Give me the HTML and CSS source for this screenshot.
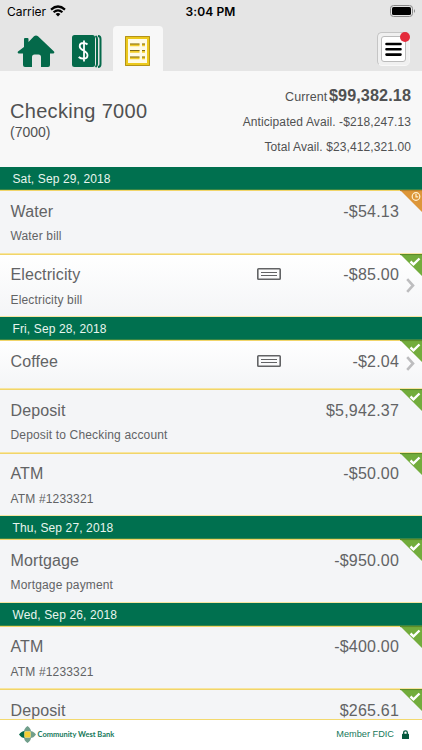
FILE: index.html
```html
<!DOCTYPE html>
<html lang="en">

<head>
    <meta charset="UTF-8">
    <meta name="viewport" content="width=device-width, initial-scale=1.0">
    <title>Checking 7000</title>
    <link rel="stylesheet" href="styles.css">
</head>

<body>
<div class="app">
    <header class="top">
        <div class="status">
            <div class="carrier">
                <span>Carrier</span>
                <svg width="16" height="12" viewBox="0 0 16 12" fill="none" stroke="#000" stroke-width="2.2">
                    <path d="M1 4.6Q8-1.6 15 4.6M3.6 7.3Q8 3.3 12.4 7.3"/>
                    <path d="M5.6 9Q8 6.9 10.4 9L8 11.5Z" fill="#000" stroke="none"/>
                </svg>
            </div>
            <div class="time">3:04 PM</div>
            <svg class="battery" width="26" height="12" viewBox="0 0 26 12">
                <rect x=".5" y=".5" width="22" height="11" rx="3" fill="none" stroke="#888"/>
                <rect x="2" y="2" width="19" height="8" rx="1.6"/>
                <path d="M24 4Q26 6 24 8Z" fill="#888"/>
            </svg>
        </div>
        <nav class="tabs">
            <a class="tab home">
                <svg width="38" height="33" viewBox="0 0 38 33" fill="#04694a">
                    <path d="M7 12V4Q7 3 8 3H10.500Q11.500 3 11.500 4V7L17 1.200Q19-.3 21 1.200L37 16.500Q38 18.500 36 18.500H33V30Q33 32 31 32H24V22Q24 19.500 21.500 19.500H17.500Q15 19.500 15 22V32H8Q6 32 6 30V18.500H2Q0 18.500 1 16.500Z"/>
                </svg>
            </a>
            <a class="tab money">
                <svg width="30" height="33" viewBox="0 0 30 33">
                    <rect x="0" y="0" width="23" height="32" rx="2.5" fill="#04694a"/>
                    <path d="M23.500 1Q25 2 25 4V29Q25 31 23.500 32M26 1Q28.500 1 28.500 4V29Q28.500 32 26 32" fill="none" stroke="#04694a" stroke-width="2"/>
                    <path d="M15.500 9.500Q14 8 11.500 8Q7.700 8 7.700 11.200Q7.700 13.500 11.500 15.500Q15.500 17.500 15.500 20.300Q15.500 23.700 11.500 23.700Q8.500 23.700 6.700 22M12 5.500V26.500" fill="none" stroke="#fff" stroke-width="1.800"/>
                </svg>
            </a>
            <a class="tab active">
                <svg width="25" height="30" viewBox="0 0 25 30">
                    <rect x="1.500" y="1.500" width="22" height="27" fill="#fffbe6" stroke="#ecc91c" stroke-width="3"/>
                    <path d="M.5 29.500V.5H24.500V29.500Z" fill="none" stroke="#b3921a"/>
                    <path d="M5 9H14.500M5 15.500H14.500M5 22H14.500M17 9H20M17 15.500H20M17 22H20" stroke="#f1cb27" stroke-width="2.600"/>
                    <path d="M5 8H14.500M5 14.500H14.500M5 21H14.500M17 8H20M17 14.500H20M17 21H20" stroke="#806b18"/>
                </svg>
            </a>
            <a class="menu">
                <span class="menu-inner">
                    <svg width="17" height="15" viewBox="0 0 17 15" stroke="#000" stroke-width="2.600" stroke-linecap="round">
                        <path d="M1.500 2H15.500M1.500 7.300H15.500M1.500 12.600H15.500"/>
                    </svg>
                </span>
                <i class="dot"></i>
            </a>
        </nav>
    </header>

    <section class="summary">
        <div class="account">
            <h1>Checking 7000</h1>
            <p>(7000)</p>
        </div>
        <div class="balances">
            <p class="current">Current <b>$99,382.18</b></p>
            <p class="anticipated">Anticipated Avail. -$218,247.13</p>
            <p class="total">Total Avail. $23,412,321.00</p>
        </div>
    </section>

    <main class="list" id="list"></main>

    <footer class="foot">
        <div class="brand">
            <svg width="17" height="17" viewBox="0 0 17 17">
                <path d="M8.500 0Q12 2.500 12 5.500H5Q5 2.500 8.500 0ZM8.500 17Q5 14.500 5 11.500H12Q12 14.500 8.500 17ZM17 8.500Q14.500 12 11.500 12V5Q14.500 5 17 8.500Z" fill="#719f8b"/>
                <path d="M0 8.500Q2.500 5 5.500 5V12Q2.500 12 0 8.500Z" fill="#04694a"/>
                <rect x="5.500" y="5.500" width="6" height="6" rx="1" fill="#f3cf35"/>
            </svg>
            <span>Community West Bank</span>
        </div>
        <div class="fdic">
            <span>Member FDIC</span>
            <svg width="7" height="9" viewBox="0 0 7 9">
                <path d="M1.700 4V2.500Q1.700.8 3.500.8T5.300 2.500V4" fill="none" stroke="#04583d" stroke-width="1.300"/>
                <rect x="0" y="3.700" width="7" height="5.300" rx=".6" fill="#04583d"/>
            </svg>
        </div>
    </footer>
</div>
<script>

    let days = [
        {
            date: 'Sat, Sep 29, 2018',
            items: [
                {name: 'Water', note: 'Water bill', amount: '-$54.13', pending: true},
                {name: 'Electricity', note: 'Electricity bill', amount: '-$85.00', check: true}
            ]
        },
        {
            date: 'Fri, Sep 28, 2018',
            items: [
                {name: 'Coffee', note: '', amount: '-$2.04', check: true, short: true},
                {name: 'Deposit', note: 'Deposit to Checking account', amount: '$5,942.37'},
                {name: 'ATM', note: 'ATM #1233321', amount: '-$50.00'}
            ]
        },
        {
            date: 'Thu, Sep 27, 2018',
            items: [
                {name: 'Mortgage', note: 'Mortgage payment', amount: '-$950.00'}
            ]
        },
        {
            date: 'Wed, Sep 26, 2018',
            items: [
                {name: 'ATM', note: 'ATM #1233321', amount: '-$400.00'},
                {name: 'Deposit', note: '', amount: '$265.61'}
            ]
        }
    ]

    // corner flags
    let clock = '<circle cx="16" cy="6.500" r="3.800"/><path d="M16 4V6.800H18.200"/>';
    let tick = '<path class="tick" d="M10.500 7.500L13.500 10.300L19.500 4.500"/>';
    let flag = item => `<svg class="flag ${item.pending ? 'pending' : 'cleared'}" width="22" height="22" viewBox="0 0 22 22">
        <path class="corner" d="M0 0H22V22Z"/><path class="shade" d="M0 .5H22"/>${item.pending ? clock : tick}</svg>`;

    let checkIcon = `<svg class="check" width="24" height="12" viewBox="0 0 24 12">
        <rect x=".8" y=".8" width="22.400" height="10.400" rx=".8"/><path d="M4 4.500H20M4 7.500H20"/></svg>`;
    let arrow = '<svg class="arrow" width="9" height="15" viewBox="0 0 9 15"><path d="M1.200 1.200L7 7.500L1.200 13.800"/></svg>';

    let list = document.querySelector("#list");
    days.forEach(day => {
        let html = `<h2 class="date">${day.date}</h2>`;
        day.items.forEach(item => {
            html += `<div class="row${item.check ? ' link' : ''}${item.short ? ' short' : ''}">
                <div class="line"><span class="name">${item.name}</span>${item.check ? checkIcon : ''}<span class="amount">${item.amount}</span></div>
                <p class="note">${item.note}</p>
                ${flag(item)}${item.check ? arrow : ''}
            </div>`;
        })
        list.insertAdjacentHTML("beforeend", html);
    })
</script>
</body>

</html>
```
FILE: styles.css
```css
* {
    margin: 0;
    padding: 0;
    box-sizing: border-box;
}

body {
    font-family: "Liberation Sans", Arial, sans-serif;
    color: #505152;
    background: #f8f8f8;
}

svg {
    display: block;
    flex-shrink: 0;
}

.app {
    height: 750px;
    display: flex;
    flex-direction: column;
    overflow: hidden;
}

.top {
    height: 71px;
    background: #e5e5e5;
}

.status {
    height: 26px;
    padding: 0 6px 4px 7px;
    display: grid;
    grid-template-columns: 1fr auto 1fr;
    align-items: center;
    font-family: Inter, sans-serif;
    font-size: 12px;
    color: #000;
}

.carrier {
    display: flex;
    align-items: center;
    gap: 4px;
}

.carrier span {
    letter-spacing: -.05px;
}

.time {
    margin-right: 2px;
    font-weight: 600;
    letter-spacing: .1px;
}

.battery {
    justify-self: end;
}

.tabs {
    height: 45px;
    padding-left: 17px;
    padding-right: 12px;
    display: flex;
}

.tab {
    padding-top: 9px;
}

.home {
    width: 55px;
}

.money {
    width: 41px;
}

.tab.active {
    width: 50px;
    padding: 10px 0 0 12px;
    background: #f8f8f8;
    border-radius: 4px 4px 0 0;
}

.menu {
    position: relative;
    width: 33px;
    height: 34px;
    margin: 6px 0 0 auto;
    padding: 3px;
    border: 1px solid #c5c5c5;
    border-right-color: #f4f4f4;
    border-bottom-color: #f8f8f8;
    border-radius: 5px;
    background: #f0f0f0;
}

.menu-inner {
    height: 26px;
    display: flex;
    align-items: center;
    justify-content: center;
    background: #fff;
    border: 1px solid #bbb;
    border-radius: 3px;
}

.dot {
    position: absolute;
    top: -1px;
    right: -1px;
    width: 10px;
    height: 10px;
    border-radius: 50%;
    background: #e42b3b;
}

.summary {
    height: 96px;
    padding: 0 11px 0 10px;
    display: flex;
    justify-content: space-between;
    background: #f8f8f8;
}

.account {
    padding-top: 28px;
}

.account h1 {
    font-size: 20px;
    line-height: 24px;
    font-weight: normal;
    letter-spacing: .3px;
}

.account p {
    font-size: 14px;
    line-height: 18px;
}

.balances {
    padding-top: 12px;
    text-align: right;
    font-size: 12px;
    line-height: 25px;
    letter-spacing: .1px;
    white-space: nowrap;
}

.current {
    font-size: 12.5px;
}

.current b {
    font-size: 16.2px;
    margin-left: -2px;
}

.list {
    height: 552px;
    overflow: hidden;
}

.date {
    height: 23px;
    padding-left: 12.5px;
    font-size: 12px;
    line-height: 24px;
    font-weight: normal;
    letter-spacing: .12px;
    color: #e8f5ee;
    background: #00704f;
    border-bottom: 1px solid #398646;
}

.row {
    position: relative;
    height: 63.5px;
    padding: 10px 23px 0 10.5px;
    background: #f4f5f7;
    color: #626365;
    border-top: 1px solid #f1d56a;
    border-bottom: 1px solid #f7e5a0;
}

.row.link {
    background: linear-gradient(#fff, #f4f5f7);
}

.row.short {
    height: 49px;
}

.line {
    display: grid;
    grid-template-columns: 246px 24px 1fr;
    align-items: center;
    height: 21px;
    font-size: 16px;
}

.amount {
    grid-column: 3;
    text-align: right;
    letter-spacing: .2px;
}

.name {
    letter-spacing: .12px;
}

.note {
    margin-top: 6px;
    font-size: 12px;
    line-height: 16px;
    letter-spacing: .16px;
}

.check {
    margin-bottom: 2px;
    fill: none;
    stroke: #626365;
    stroke-width: 1.6;
}

.check path {
    stroke-width: 1;
}

.flag {
    position: absolute;
    top: -1px;
    right: 0;
    fill: none;
    stroke: #fff1d2;
    stroke-width: 1.2;
}

.cleared .corner {
    fill: #72ac3c;
    stroke: none;
}

.pending .corner {
    fill: #dd9639;
    stroke: none;
}

.cleared .shade {
    stroke: #5d8c28;
}

.pending .shade {
    stroke: #b9812b;
}

.flag .tick {
    stroke: #fff;
    stroke-width: 2.4;
}

.arrow {
    position: absolute;
    top: 23px;
    right: 7px;
    fill: none;
    stroke: #bdbdbf;
    stroke-width: 2.6;
}

.short .arrow {
    top: 15px;
}

.foot {
    height: 31px;
    padding: 0 13px 2px 19px;
    display: flex;
    justify-content: space-between;
    align-items: center;
    background: #fff;
    border-top: 1px solid #f3d96f;
    color: #16785a;
}

.brand, .fdic {
    display: flex;
    align-items: center;
}

.brand {
    gap: 1.5px;
    font-family: Lato, sans-serif;
    font-size: 7.5px;
    font-weight: bold;
}

.fdic {
    gap: 8px;
    font-size: 9.2px;
}
```
